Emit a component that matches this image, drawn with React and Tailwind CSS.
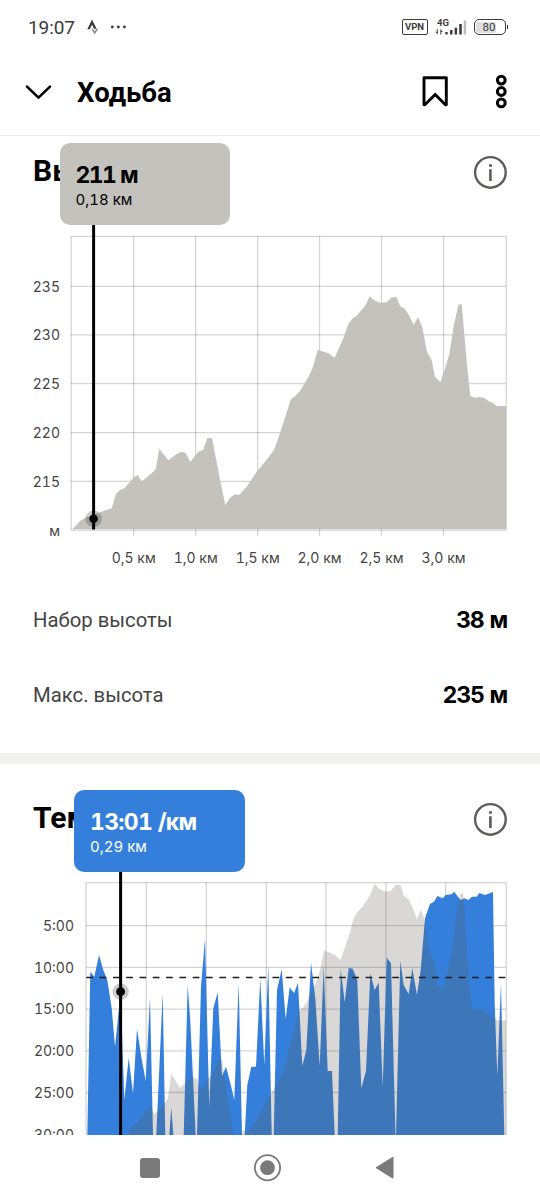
const elevation =
  '72.7,529 80,521 85,517.7 100,512.3 111.7,508.3 116,493.7 120,490 124.7,488 133.3,477.7 137.7,475 141.7,481.3 151.7,473.3 155.7,469 159.3,448.7 168.3,460.3 176.7,454 181.3,451.7 185.7,453 190.3,462 198.3,451.7 203.3,449.7 207.3,438 212,438 220.7,483.3 225.3,505 230,498 234.7,494.3 239,495 246.7,486.7 257,471.3 265,461.7 274,450 278.3,438.3 291,399 295.7,395.7 300,391 309,376 313.3,366 317.7,350 328.3,353.3 334.7,357.7 343.3,338.3 348.3,324 352.7,318.3 356.7,315.7 365.7,305 369.7,296.3 374.3,300.3 380,302.7 386.7,302.3 391.7,297.3 396.7,297.3 400,306 405,309 409.3,315.7 413.7,325 418,317 422.3,327.3 427,352 431.7,360 435,376.7 440.3,382.3 444.3,370.7 449.3,354.3 453.3,328.3 458.3,305 461.7,304 466.7,361.7 470.3,396 475,397.7 479,397 484,397.7 488.3,401 492.3,402.7 496.7,406 506,406 506,529';

const pace =
  '87.3,1135 90.3,971.7 94.3,976.7 99,955 103.3,970 107.3,980 111.7,1008.3 115,1046.7 120.7,991.7 124.3,1100 128.7,1057.7 133,1093.3 137,1029 141.3,1056.7 145.7,1081 150,997.7 153,1135 156.3,1135 162.7,993.3 165.3,1135 169.3,1135 171.3,1107.3 173.3,1135 183.7,1135 187.7,985 190.3,1021 195.7,1135 197,1135 201,986.7 205,939 209.3,1106.7 213.3,1008.3 217.7,992.3 222,1076 226,1066.7 230,1081.7 234.3,1100 238.7,982.7 242,1135 244.7,1135 247.3,1085 251.3,1066.7 256,1066.7 260.3,978.3 264.3,1065 268.3,965 271.7,1135 273.7,1135 277,990 281.7,969.3 285.7,1019 289.7,987.3 294,993.3 298,982.7 302.3,1066 306.3,1050 311,962.7 315.3,998.3 319.7,1066 323.7,966.7 327.7,1071 332,1071 334.7,1135 337.7,1135 340.7,969.3 344.7,1002.3 348.7,968 352.7,968.7 357.3,980 361.3,1088.3 366,1071 370.3,973.3 374.7,990 378.7,982.7 382.7,1086.7 386.7,957.7 391,963.3 395.5,1135 396,1135 400.3,960.7 403.7,985 408.7,994.3 412.3,968.3 417,995 420.7,970 425,918.3 430,904 434,901.7 437.3,896 442.7,898.3 445.7,895 451.7,894.3 454.3,891.7 458.3,897.3 460.7,900 464.3,898.3 468.3,900 472,896.7 476.7,896.7 479.3,893 485,895 493,892 494.7,1003.3 497.3,1075.7 501,982.7 504.3,1135';

const elevationX = [
  { x: 133.7, label: '0,5 км' },
  { x: 195.7, label: '1,0 км' },
  { x: 257.7, label: '1,5 км' },
  { x: 319.5, label: '2,0 км' },
  { x: 381.5, label: '2,5 км' },
  { x: 443.5, label: '3,0 км' },
];

const elevationY = [
  { y: 286.3, label: '235' },
  { y: 334.8, label: '230' },
  { y: 383.7, label: '225' },
  { y: 432.6, label: '220' },
  { y: 481.4, label: '215' },
];

const paceX = [146.3, 206.3, 266.3, 326, 386, 445.7];

const paceY = [
  { y: 925.6, label: '5:00' },
  { y: 967.4, label: '10:00' },
  { y: 1009.1, label: '15:00' },
  { y: 1050.8, label: '20:00' },
  { y: 1092.5, label: '25:00' },
];

function StatusBar() {
  return (
    <div className="h-[54px] shrink-0 flex items-center justify-between pl-7 pr-8 text-[#3c3c3c]">
      <div className="flex items-center">
        <span className="w-[47px] pt-px text-[19px] leading-6 tracking-[-0.1px]">19:07</span>
        <svg className="ml-3 w-3 h-4" viewBox="0 0 12 16">
          <path d="M0.3 10.2 5 0.5l4.6 9.2H7L5 5.7l-2.2 4.5z" fill="#3c3c3c" />
          <path d="M4.3 9.7h1.8l1.5 2.8 1.6-2.8h2.2L7.6 15.6z" fill="#8c8c8c" />
        </svg>
        <svg className="ml-[11px] w-4 h-4" viewBox="0 0 16 16" fill="#3c3c3c">
          <circle cx="2.3" cy="8" r="1.4" />
          <circle cx="8.4" cy="8" r="1.4" />
          <circle cx="14.4" cy="8" r="1.4" />
        </svg>
      </div>
      <div className="flex items-center">
        <span className="w-[26px] h-4 rounded-[2px] border-[1.5px] border-[#3c3c3c] text-[9.5px] leading-[14px] font-bold text-center">VPN</span>
        <svg className="ml-[7px] w-8 h-4 overflow-visible" viewBox="0 0 32 16" fill="#3c3c3c">
          <text x="2" y="7" fontSize="9.5" fontWeight="700">4G</text>
          <path d="M2.7 10v5.6L0.3 12.8h1.5V10zM5.3 15.4V9.9l2.6 3H6.3v2.5z" />
          <path d="M10.3 13h2.4v2.4h-2.4zM15 11h2.5v4.4H15zM19.6 8.7h2.5v6.7h-2.5zM24.2 5h2.6v10.4h-2.6z" />
          <path d="M28.7 1.5h2.5v13.9h-2.5z" fill="#bdbdbd" />
        </svg>
        <div className="ml-[7px] w-8 h-4 rounded-[5px] border-[1.5px] border-[#3c3c3c] p-[1.5px]">
          <div className="w-5 h-full rounded-[2px] bg-[#dedede]">
            <div className="w-[26px] text-[11.5px] leading-[11.5px] text-center">80</div>
          </div>
        </div>
        <div className="ml-px w-[1.5px] h-1 bg-[#3c3c3c]" />
      </div>
    </div>
  );
}

function Header() {
  return (
    <div className="h-[82px] shrink-0 flex items-center border-b border-[#ececec] pl-[25px] pr-[29px] pb-[6px]">
      <svg className="w-[27px] h-4" viewBox="0 0 27 16" fill="none" stroke="#000" strokeWidth="2.6" strokeLinecap="round" strokeLinejoin="round">
        <path d="M2 2.6 13.5 13.6 25 2.6" />
      </svg>
      <h1 className="ml-[25px] pt-0.5 text-[27.5px] leading-9 font-bold">Ходьба</h1>
      <svg className="ml-auto w-[26px] h-8" viewBox="0 0 26 32" fill="none" stroke="#000" strokeWidth="2.9" strokeLinejoin="round">
        <path d="M2 1.8h22.3v27h-0.9L13.2 18.4 2.9 28.8H2z" />
      </svg>
      <svg className="ml-[43px] w-5 h-9" viewBox="0 0 20 36" fill="none" stroke="#000" strokeWidth="3">
        <circle cx="10.3" cy="6.1" r="3.9" />
        <circle cx="10.3" cy="17.5" r="3.9" />
        <circle cx="10.3" cy="28.9" r="3.9" />
      </svg>
    </div>
  );
}

function InfoIcon() {
  return (
    <svg className="w-[34px] h-[34px]" viewBox="0 0 34 34">
      <circle cx="16.4" cy="17.4" r="15.3" fill="none" stroke="#5c5c59" strokeWidth="2.4" />
      <path d="M15 9.3h2.9v2.4H15zM15.1 14.3h2.6v11.6h-2.6z" fill="#5c5c59" />
    </svg>
  );
}

function Stat({ label, value }) {
  return (
    <div className="h-[74.5px] flex items-center justify-between px-[33px]">
      <span className="text-[20.3px] text-[#444442]">{label}</span>
      <span className="font-[Inter] text-[23px] font-bold tracking-[-1.1px] [word-spacing:1.5px]">{value}</span>
    </div>
  );
}

function ElevationChart() {
  return (
    <svg className="block w-[540px] h-[358px]" viewBox="0 225 540 358">
      <g stroke="#000" strokeOpacity="0.17" strokeWidth="1.3" fill="none">
        <path d="M71.2 236.3H506.3V530H71.2z" />
        {elevationX.map(({ x }) => <path key={x} d={`M${x} 236V536`} />)}
        {elevationY.map(({ y }) => <path key={y} d={`M71 ${y}H506`} />)}
      </g>
      <polygon points={elevation} fill="#c3c2bd" />
      <g className="font-[Inter] tabular-nums" fontSize="14" fill="#444442">
        {elevationY.map(({ y, label }) => <text key={label} x="60" y={y + 5.2} textAnchor="end">{label}</text>)}
        <text x="60" y="536" textAnchor="end">м</text>
        {elevationX.map(({ x, label }) => <text key={label} x={x} y="562.5" textAnchor="middle">{label}</text>)}
      </g>
      <path d="M93.6 225V529.5" stroke="#000" strokeWidth="3" />
      <circle cx="93.6" cy="518.7" r="8.2" fill="#000" fillOpacity="0.2" />
      <circle cx="93.6" cy="518.7" r="4.3" />
    </svg>
  );
}

function PaceChart() {
  return (
    <svg className="block w-[540px] h-[264px]" viewBox="0 871 540 264">
      <g stroke="#000" strokeOpacity="0.17" strokeWidth="1.3" fill="none">
        <path d="M86 1140V882.6H506.3V1140" />
        {paceX.map((x) => <path key={x} d={`M${x} 882V1140`} />)}
        {paceY.map(({ y }) => <path key={y} d={`M86 ${y}H506`} />)}
      </g>
      <polygon points={pace} fill="#347fdb" />
      {/* same elevation profile, stretched to the pace axes */}
      <polygon
        points={elevation}
        transform="translate(86 883.5) scale(0.9655 1.247) translate(-71 -296.3)"
        fill="#5f5e54"
        fillOpacity="0.24"
      />
      <path d="M86.3 977.5H506" stroke="#1c1c1c" strokeWidth="1.3" strokeDasharray="6.7 6.6" />
      <g className="font-[Inter] tabular-nums" fontSize="14" fill="#444442">
        {paceY.map(({ y, label }) => <text key={label} x="74" y={y + 5.2} textAnchor="end">{label}</text>)}
        <text x="74" y="1139.5" textAnchor="end">30:00</text>
      </g>
      <path d="M120.6 871V1135" stroke="#000" strokeWidth="3" />
      <circle cx="120.6" cy="991.7" r="8.2" fill="#000" fillOpacity="0.2" />
      <circle cx="120.6" cy="991.7" r="4.4" />
    </svg>
  );
}

function NavBar() {
  return (
    <div className="h-[65px] shrink-0 flex items-center pl-[140px] text-[#7a7a7a]">
      <div className="w-5 h-5 rounded-[3px] bg-[#7a7a7a]" />
      <svg className="ml-[93px] w-7 h-7" viewBox="0 0 28 28">
        <circle cx="14.5" cy="13.7" r="12.6" fill="none" stroke="currentColor" strokeWidth="1.8" />
        <circle cx="14.5" cy="13.7" r="7.4" fill="currentColor" />
      </svg>
      <svg className="ml-[93px] w-5 h-6" viewBox="0 0 20 24">
        <path d="M2 11.7 19 1.2v21z" fill="currentColor" stroke="currentColor" strokeLinejoin="round" />
      </svg>
    </div>
  );
}

export default function App() {
  return (
    <div className="w-[540px] h-[1200px] flex flex-col overflow-hidden bg-white text-black font-[Roboto,sans-serif]">
      <StatusBar />
      <Header />

      <section className="relative h-[617px] shrink-0">
        <div className="h-[89px] flex items-start justify-between pl-[33px] pr-8 pt-[19px]">
          <h2 className="text-[30px] leading-8 font-bold">Высота</h2>
          <InfoIcon />
        </div>
        <ElevationChart />
        <Stat label="Набор высоты" value="38 м" />
        <Stat label="Макс. высота" value="235 м" />
        <div className="absolute left-[59.5px] top-[7px] w-[170.5px] h-[82px] rounded-[10px] bg-[#c3c2bd] pl-4 pt-[17px] font-[Inter] tabular-nums">
          <div className="text-[23px] leading-[30px] font-bold tracking-[-1.6px]">211 м</div>
          <div className="text-[15px] leading-5">0,18 км</div>
        </div>
      </section>

      <div className="h-[11px] shrink-0 bg-[#f1f1ef]" />

      <section className="relative h-[371px] shrink-0">
        <div className="h-[107px] flex items-start justify-between pl-[33px] pr-8 pt-[38px]">
          <h2 className="text-[30px] leading-8 font-bold">Темп</h2>
          <InfoIcon />
        </div>
        <PaceChart />
        <div className="absolute left-[74px] top-[26px] w-[170.5px] h-[82px] rounded-[10px] bg-[#347fdb] pl-4 pt-[17px] font-[Inter] tabular-nums text-white">
          <div className="text-[23px] leading-[30px] font-bold tracking-[-0.7px]">13:01 /км</div>
          <div className="text-[15px] leading-5">0,29 км</div>
        </div>
      </section>

      <NavBar />
    </div>
  );
}
